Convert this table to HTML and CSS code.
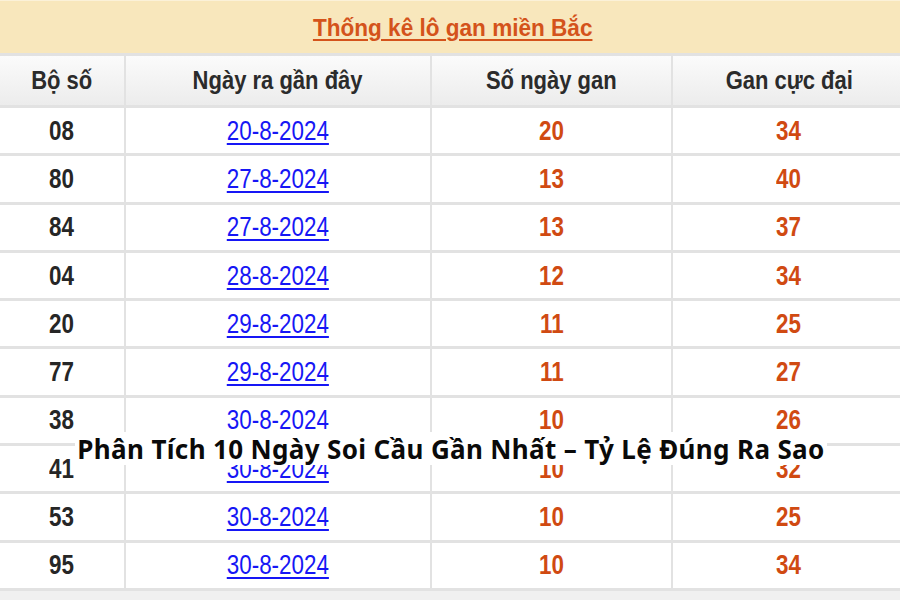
FILE: index.html
```html
<!DOCTYPE html>
<html lang="vi">
<head>
<meta charset="utf-8">
<title>Thống kê lô gan miền Bắc</title>
<link rel="stylesheet" href="styles.css">
</head>
<body>
<div class="page">
  <div class="title-bar"><a class="title-link sx-title">Thống kê lô gan miền Bắc</a></div>
  <div class="grid">
    <div class="cell head"><span class="sx sx-head">Bộ số</span></div>
    <div class="cell head"><span class="sx sx-head">Ngày ra gần đây</span></div>
    <div class="cell head"><span class="sx sx-head">Số ngày gan</span></div>
    <div class="cell head"><span class="sx sx-head">Gan cực đại</span></div>

    <div class="cell num"><span class="sx">08</span></div>
    <div class="cell"><a class="date sx">20-8-2024</a></div>
    <div class="cell red"><span class="sx">20</span></div>
    <div class="cell red"><span class="sx">34</span></div>

    <div class="cell num"><span class="sx">80</span></div>
    <div class="cell"><a class="date sx">27-8-2024</a></div>
    <div class="cell red"><span class="sx">13</span></div>
    <div class="cell red"><span class="sx">40</span></div>

    <div class="cell num"><span class="sx">84</span></div>
    <div class="cell"><a class="date sx">27-8-2024</a></div>
    <div class="cell red"><span class="sx">13</span></div>
    <div class="cell red"><span class="sx">37</span></div>

    <div class="cell num"><span class="sx">04</span></div>
    <div class="cell"><a class="date sx">28-8-2024</a></div>
    <div class="cell red"><span class="sx">12</span></div>
    <div class="cell red"><span class="sx">34</span></div>

    <div class="cell num"><span class="sx">20</span></div>
    <div class="cell"><a class="date sx">29-8-2024</a></div>
    <div class="cell red"><span class="sx">11</span></div>
    <div class="cell red"><span class="sx">25</span></div>

    <div class="cell num"><span class="sx">77</span></div>
    <div class="cell"><a class="date sx">29-8-2024</a></div>
    <div class="cell red"><span class="sx">11</span></div>
    <div class="cell red"><span class="sx">27</span></div>

    <div class="cell num"><span class="sx">38</span></div>
    <div class="cell"><a class="date sx">30-8-2024</a></div>
    <div class="cell red"><span class="sx">10</span></div>
    <div class="cell red"><span class="sx">26</span></div>

    <div class="cell num"><span class="sx">41</span></div>
    <div class="cell"><a class="date sx">30-8-2024</a></div>
    <div class="cell red"><span class="sx">10</span></div>
    <div class="cell red"><span class="sx">32</span></div>

    <div class="cell num"><span class="sx">53</span></div>
    <div class="cell"><a class="date sx">30-8-2024</a></div>
    <div class="cell red"><span class="sx">10</span></div>
    <div class="cell red"><span class="sx">25</span></div>

    <div class="cell num"><span class="sx">95</span></div>
    <div class="cell"><a class="date sx">30-8-2024</a></div>
    <div class="cell red"><span class="sx">10</span></div>
    <div class="cell red"><span class="sx">34</span></div>
  </div>
  <div class="bottom-strip"></div>
  <div class="caption">Phân Tích 10 Ngày Soi Cầu Gần Nhất – Tỷ Lệ Đúng Ra Sao</div>
</div>
</body>
</html>
```

FILE: styles.css
```css
html, body {
  margin: 0;
  padding: 0;
  background: #ffffff;
  overflow: hidden;
}

.page {
  position: relative;
  width: 905px;
  font-family: "Liberation Sans", Arial, sans-serif;
}

.title-bar {
  height: 53px;
  background: #f8e7bc;
  border-top: 1px solid #fbf1d8;
  box-sizing: border-box;
  display: flex;
  align-items: center;
  justify-content: center;
}

.title-link {
  display: inline-block;
  color: #d4531b;
  font-weight: bold;
  font-size: 24px;
  text-decoration: underline;
  text-decoration-color: #d4531b;
  text-decoration-thickness: 2px;
  text-underline-offset: 3px;
}

.sx {
  display: inline-block;
  transform: scaleX(0.8);
}

.sx-title {
  transform: scaleX(0.94);
  padding-top: 2px;
}

.sx-head {
  transform: scaleX(0.88);
}

.grid {
  display: grid;
  grid-template-columns: 124px 304px 239px 232px;
  grid-template-rows: 49px repeat(10, 45.3px);
  column-gap: 2px;
  row-gap: 3px;
  padding: 3px 0;
  background: #e2e2e2;
}

.cell {
  background: #ffffff;
  display: flex;
  align-items: center;
  justify-content: center;
  font-size: 28px;
  font-weight: bold;
  line-height: 1;
}

.cell.head {
  background: linear-gradient(#fbfbfb, #ececec);
  font-size: 25px;
  color: #2b2b2b;
}

.num {
  color: #262626;
}

.red {
  color: #d04a12;
}

.date {
  color: #1616f5;
  font-weight: normal;
  font-size: 28px;
  text-decoration: underline;
  text-decoration-thickness: 2px;
  text-underline-offset: 3px;
}

.bottom-strip {
  height: 12px;
  background: #f0f0f0;
}

.caption {
  position: absolute;
  left: 75px;
  top: 432px;
  width: 752px;
  height: 33px;
  background: #ffffff;
  display: flex;
  align-items: center;
  justify-content: center;
  font-family: "Noto Sans", "Open Sans", sans-serif;
  font-weight: bold;
  font-size: 26px;
  letter-spacing: 0.35px;
  color: #0a0a0a;
  white-space: nowrap;
}
```
